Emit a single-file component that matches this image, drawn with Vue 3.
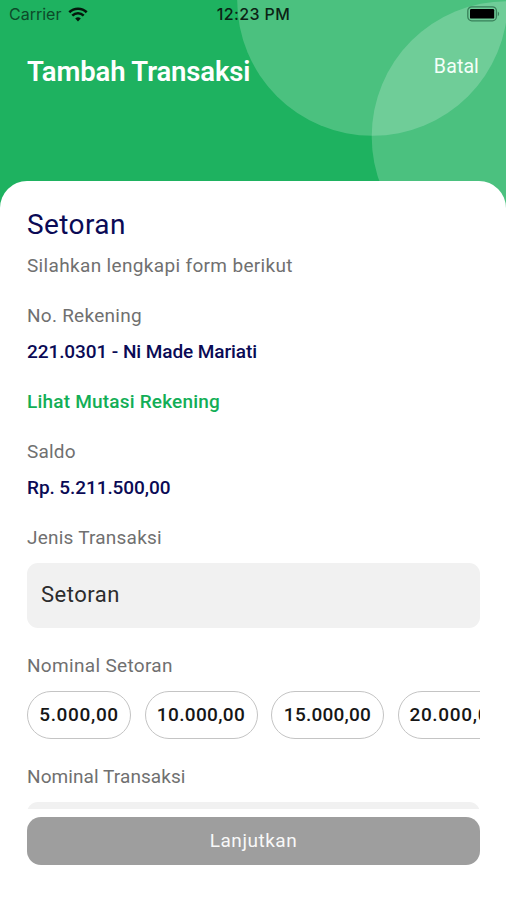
<script setup>
const amounts = [
  { value: '5.000,00', tone: 'wide' },
  { value: '10.000,00', tone: 'mid' },
  { value: '15.000,00', tone: 'tight' },
  { value: '20.000,00', tone: 'wide' },
]
</script>

<template>
  <div class="screen">
    <header class="header">
      <svg class="circles" viewBox="0 0 506 210" width="506" height="210" aria-hidden="true">
        <circle cx="372.5" cy="0.5" r="135.3" />
        <circle cx="507" cy="136.5" r="135.3" />
      </svg>
      <div class="status">
        <div class="carrier">
          <span>Carrier</span>
          <svg class="wifi" viewBox="0 0 20 15" width="20" height="15" aria-hidden="true">
            <path d="M1.3 5.3a12.5 12.5 0 0 1 17.4 0" />
            <path d="M4.3 8.6a8.2 8.2 0 0 1 11.4 0" />
            <path class="dot" d="M7.2 11.6a4.2 4.2 0 0 1 5.6 0L10 14.4z" />
          </svg>
        </div>
        <span class="time">12:23 PM</span>
        <div class="power">
          <svg viewBox="0 0 33 16" width="33" height="16" aria-hidden="true">
            <rect class="shell" x="0.8" y="0.8" width="28.6" height="14" rx="4" />
            <rect x="3" y="3" width="24.2" height="9.6" rx="1.2" />
            <path class="tip" d="M30.8 5.6c1.8.8 1.8 3.8 0 4.6z" />
          </svg>
        </div>
      </div>
      <div class="bar">
        <h1>Tambah Transaksi</h1>
        <a class="cancel">Batal</a>
      </div>
    </header>

    <main class="sheet">
      <div class="content">
        <h2>Setoran</h2>
        <p class="label intro">Silahkan lengkapi form berikut</p>

        <p class="label account">No. Rekening</p>
        <p class="value holder">221.0301 - Ni Made Mariati</p>
        <a class="link">Lihat Mutasi Rekening</a>

        <p class="label saldo">Saldo</p>
        <p class="value">Rp. 5.211.500,00</p>

        <p class="label type">Jenis Transaksi</p>
        <div class="field">Setoran</div>

        <p class="label nominal">Nominal Setoran</p>
        <div class="chips">
          <button v-for="a in amounts" :key="a.value" class="chip" :class="a.tone">{{ a.value }}</button>
        </div>

        <p class="label last">Nominal Transaksi</p>
        <div class="field"></div>
      </div>
      <footer class="footer">
        <button class="submit">Lanjutkan</button>
      </footer>
    </main>
  </div>
</template>

<style>
body {
  margin: 0;
  background: #fff;
}
</style>

<style scoped>
.screen {
  width: 506px;
  height: 900px;
  overflow: hidden;
  display: flex;
  flex-direction: column;
  font-family: Roboto, "Liberation Sans", sans-serif;
  background: #fff;
}
.header {
  position: relative;
  height: 210px;
  flex: none;
  background: #1eb260;
}
.circles {
  position: absolute;
  inset: 0;
  fill: #fff;
  fill-opacity: 0.2;
}
.status {
  position: relative;
  display: grid;
  grid-template-columns: 1fr auto 1fr;
  align-items: center;
  height: 28px;
  padding: 0 6px 0 9px;
  font-family: Inter, sans-serif;
  font-size: 16px;
  line-height: 28px;
  color: #0b2315;
}
.carrier {
  display: flex;
  align-items: center;
  gap: 6.5px;
  color: #0c4a29;
}
.wifi {
  fill: none;
  stroke: #04180c;
  stroke-width: 2.6;
}
.wifi .dot {
  fill: #04180c;
  stroke: none;
}
.time {
  font-weight: 500;
  letter-spacing: 0.38px;
  margin-right: 2px;
}
.power {
  display: flex;
  justify-content: flex-end;
  fill: #000;
}
.shell {
  fill: none;
  stroke: #39805a;
  stroke-width: 1.3;
}
.tip {
  fill: #39805a;
}
.bar {
  position: relative;
  display: flex;
  justify-content: space-between;
  padding: 26px 27px 0 27px;
}
h1 {
  margin: 0;
  font-size: 27.5px;
  line-height: 36px;
  font-weight: 600;
  letter-spacing: -0.15px;
  color: #fff;
}
.cancel {
  font-size: 19.5px;
  line-height: 25px;
  letter-spacing: 0.13px;
  color: #f4fff8;
}
.sheet {
  position: relative;
  flex: 1;
  min-height: 0;
  display: flex;
  flex-direction: column;
  margin-top: -29px;
  padding: 0 26px 35px 27px;
  border-radius: 27px 27px 0 0;
  background: #fff;
}
.content {
  height: 628px;
  flex: none;
  overflow: hidden;
}
h2 {
  margin: 26px 0 11px;
  font-size: 28px;
  line-height: 36px;
  font-weight: 400;
  letter-spacing: 0.4px;
  color: #0a0a55;
}
.label,
.value,
.link {
  display: block;
  margin: 0;
  font-size: 19px;
  line-height: 24px;
  white-space: nowrap;
}
.label {
  color: #707070;
}
.intro {
  margin-bottom: 26px;
  letter-spacing: 0.34px;
}
.account {
  letter-spacing: 0.26px;
}
.value {
  margin: 12px 0 26px;
  font-weight: 500;
  letter-spacing: -0.08px;
  color: #0a0a55;
}
.link {
  margin-bottom: 26px;
  font-weight: 500;
  letter-spacing: 0.2px;
  color: #12ae56;
}
.saldo {
  letter-spacing: 0.2px;
}
.type {
  letter-spacing: 0.22px;
}
.nominal {
  letter-spacing: 0.32px;
}
.last {
  letter-spacing: 0.08px;
}
.field {
  box-sizing: border-box;
  height: 65px;
  margin: 13px 0 26px;
  padding: 0 14px;
  border-radius: 11px;
  background: #f1f1f1;
  font-size: 22px;
  line-height: 63px;
  letter-spacing: 0.48px;
  color: #2c2c2c;
}
.chips {
  display: flex;
  gap: 13.5px;
  margin: 13px 0 26px;
  overflow: hidden;
}
.chip {
  flex: none;
  box-sizing: border-box;
  width: 113px;
  height: 48px;
  padding: 0;
  border: 1px solid #c4c4c4;
  border-radius: 24px;
  background: #fff;
  font: 500 19px/46px Roboto, sans-serif;
  color: #161616;
}
.wide {
  letter-spacing: 0.67px;
}
.mid {
  letter-spacing: 0.36px;
}
.tight {
  letter-spacing: 0.24px;
}
.chip:first-child {
  width: 104px;
}
.chip:last-child {
  width: 115px;
}
.footer {
  padding-top: 8px;
}
.submit {
  display: block;
  width: 100%;
  height: 48px;
  padding: 0;
  border: 0;
  border-radius: 14px;
  background: #9e9e9e;
  font: 400 19px/48px Roboto, sans-serif;
  letter-spacing: 0.53px;
  color: #f8f8f8;
}
</style>
